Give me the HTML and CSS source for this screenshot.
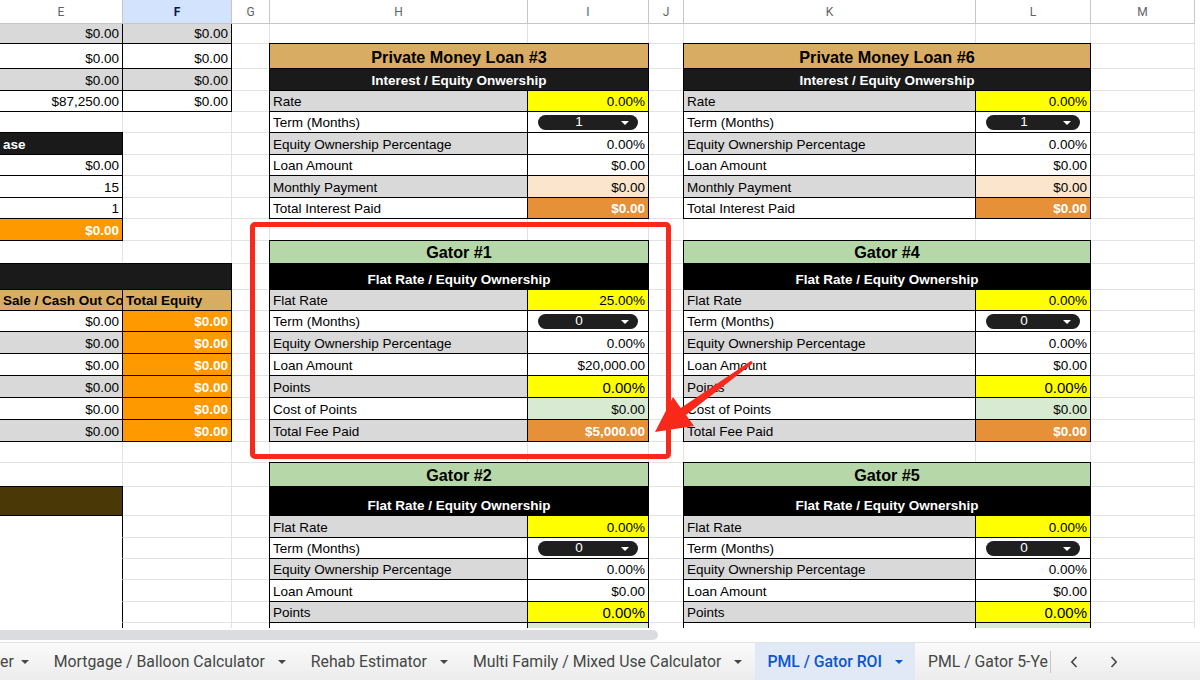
FILE: index.html
```html
<!DOCTYPE html>
<html lang="en">
<head>
    <meta charset="UTF-8">
    <meta name="viewport" content="width=device-width, initial-scale=1.0">
    <title>PML / Gator ROI</title>
    <link rel="stylesheet" href="styles.css">
</head>
<body>

<div class="app">
    <!-- cells get built by the script below -->
    <div class="sheet" id="sheet"></div>

    <div class="hscroll"><div class="thumb"></div></div>

    <div class="tabs">
        <div class="tab first"><span>er</span><i class="caret"></i></div>
        <div class="tab"><span>Mortgage / Balloon Calculator</span><i class="caret"></i></div>
        <div class="tab"><span>Rehab Estimator</span><i class="caret"></i></div>
        <div class="tab"><span>Multi Family / Mixed Use Calculator</span><i class="caret"></i></div>
        <div class="tab active"><span>PML / Gator ROI</span><i class="caret"></i></div>
        <div class="tab cut"><span>PML / Gator 5-Ye</span></div>
        <div class="divider"></div>
        <div class="nav">
            <svg width="8" height="12" viewBox="0 0 8 12"><path d="M6.5 1 1.8 6l4.7 5" fill="none" stroke="#444746" stroke-width="1.6"/></svg>
            <svg width="8" height="12" viewBox="0 0 8 12"><path d="M1.5 1 6.2 6l-4.7 5" fill="none" stroke="#444746" stroke-width="1.6"/></svg>
        </div>
    </div>

    <!-- annotation drawn on top of the screenshot -->
    <div class="mark"></div>
    <svg class="arrow" viewBox="0 0 1200 680">
        <polygon points="751.1,360.8 680.8,407.9 673,397 655,432 694,426 686,415.1 752.9,363.2" fill="#f8291a"/>
    </svg>
</div>

<script>
    const sheet = document.getElementById('sheet');
    const LAST_ROW = 28; // only a sliver of this row shows above the scrollbar

    function add(cls, text) {
        const d = document.createElement('div');
        d.className = cls;
        if (text) d.textContent = text;
        sheet.appendChild(d);
        return d;
    }

    // one grid cell, empty ones just show the grid lines
    function put(item, hideText) {
        if (!item) return add('cell', '');
        const cls = item[0];
        const text = hideText ? '' : item[1];
        if (cls.includes('pick')) {
            const d = add('cell ' + cls, '');
            const chip = document.createElement('span');
            chip.className = 'chip';
            chip.textContent = text;
            d.appendChild(chip);
            return d;
        }
        return add('cell ' + cls, text);
    }

    function pml(n) {
        return [
            [['tan title span2 b bl bt', 'Private Money Loan #' + n]],
            [['ink sub span2 b bl', 'Interest / Equity Onwership']],
            [['gray b bl', 'Rate'], ['yel b num', '0.00%']],
            [['b bl', 'Term (Months)'], ['b pick', '1']],
            [['gray b bl', 'Equity Ownership Percentage'], ['b num', '0.00%']],
            [['b bl', 'Loan Amount'], ['b num', '$0.00']],
            [['gray b bl', 'Monthly Payment'], ['peach b num', '$0.00']],
            [['b bl', 'Total Interest Paid'], ['total b num', '$0.00']]
        ];
    }

    function gator(n, rate, loan, fee) {
        return [
            [['green title span2 b bl bt', 'Gator #' + n]],
            [['black sub span2 b bl', 'Flat Rate / Equity Ownership']],
            [['gray b bl', 'Flat Rate'], ['yel b num', rate]],
            [['b bl', 'Term (Months)'], ['b pick', '0']],
            [['gray b bl', 'Equity Ownership Percentage'], ['b num', '0.00%']],
            [['b bl', 'Loan Amount'], ['b num', loan]],
            [['gray b bl', 'Points'], ['yel b num big', '0.00%']],
            [['b bl', 'Cost of Points'], ['mint b num', '$0.00']],
            [['gray b bl', 'Total Fee Paid'], ['total b num', fee]]
        ];
    }

    // tables stacked down a column pair, keyed by sheet row
    function stack(a, b, c) {
        const out = {};
        [[2, a], [11, b], [21, c]].forEach(([start, t]) => {
            t.forEach((row, i) => out[start + i] = row);
        });
        return out;
    }

    const colH = stack(pml(3), gator(1, '25.00%', '$20,000.00', '$5,000.00'), gator(2, '0.00%', '$0.00', '$0.00'));
    const colK = stack(pml(6), gator(4, '0.00%', '$0.00', '$0.00'), gator(5, '0.00%', '$0.00', '$0.00'));

    const colE = {
        1: [['gray b num', '$0.00'], ['gray b num', '$0.00']],
        2: [['b num', '$0.00'], ['b num', '$0.00']],
        3: [['gray b num', '$0.00'], ['gray b num', '$0.00']],
        4: [['b num', '$87,250.00'], ['b num', '$0.00']],
        6: [['ink b bt bold', 'ase'], null],
        7: [['b num', '$0.00'], null],
        8: [['b num', '15'], null],
        9: [['b num', '1'], null],
        10: [['orange b num', '$0.00'], null],
        12: [['ink b bt span2', '']],
        13: [['tan b bold', 'Sale / Cash Out Co'], ['tan b bold', 'Total Equity']],
        22: [['brown b bt', ''], null]
    };
    for (let r = 14; r <= 19; r++) {
        colE[r] = [[(r % 2 ? 'gray ' : '') + 'b num', '$0.00'], ['orange b num', '$0.00']];
    }
    for (let r = 23; r <= LAST_ROW; r++) colE[r] = [['merged', ''], null];

    // column letters
    ['E', 'F', 'G', 'H', 'I', 'J', 'K', 'L', 'M'].forEach(l => {
        add(l === 'F' ? 'hd sel' : 'hd', l);
    });

    for (let r = 1; r <= LAST_ROW; r++) {
        const row = [].concat(
            colE[r] || [null, null], [null],
            colH[r] || [null, null], [null],
            colK[r] || [null, null], [null]
        );
        row.forEach(item => put(item, r === LAST_ROW));
    }
</script>

</body>
</html>
```

FILE: styles.css
```css
* {
    box-sizing: border-box;
}
body {
    margin: 0;
    overflow: hidden;
    background: #fff;
    font-family: "Liberation Sans", Arial, sans-serif;
}
.app {
    position: relative;
    width: 1200px;
    height: 680px;
    display: flex;
    flex-direction: column;
}

/* Sheet grid */
.sheet {
    flex: none;
    height: 628px;
    overflow: hidden;
    display: grid;
    grid-template-columns: 123px 109px 38px 258px 121px 35px 292px 115px 104px;
    grid-template-rows: 24px 20px 25px 22px 21px 21px 22px 21px 22px 21px 22px 23px 26px 21px 21px 22px 22px 22px 22px 22px 21px 24px 29px 22px 21px 21px 22px 21px 22px;
}
.hd {
    display: flex;
    align-items: center;
    justify-content: center;
    padding-top: 1px;
    border-right: 1px solid #c4c7c5;
    border-bottom: 1px solid #c4c7c5;
    background: #fff;
    color: #5f6368;
    font: 12px Roboto, Arial, sans-serif;
}
.hd.sel {
    background: #d3e3fd;
    color: #041e49;
    font-weight: bold;
}
.cell {
    display: flex;
    align-items: flex-end;
    padding: 0 3px 1px;
    border-right: 1px solid #e2e3e3;
    border-bottom: 1px solid #e2e3e3;
    font-size: 13.5px;
    line-height: 16px;
    color: #000;
    white-space: nowrap;
    overflow: hidden;
    min-width: 0;
}
.b {
    border-right-color: #000;
    border-bottom-color: #000;
}
.bl {
    border-left: 1px solid #000;
    margin-left: -1px;
}
.bt {
    border-top: 1px solid #000;
    margin-top: -1px;
}
.num {
    justify-content: flex-end;
}
.span2 {
    grid-column: span 2;
}
.title {
    justify-content: center;
    font-weight: bold;
    font-size: 16.2px;
    line-height: 19px;
}
.sub {
    justify-content: center;
    font-weight: bold;
}
.bold {
    font-weight: bold;
}
.big {
    font-size: 15px;
}
.merged {
    border-right-color: #000;
    border-bottom-color: #fff;
}

/* fills */
.gray { background: #d9d9d9; }
.yel { background: #ffff00; }
.peach { background: #fce5cd; }
.mint { background: #d9ead3; }
.tan { background: #d8ac62; }
.green { background: #b6d7a8; }
.brown { background: #4a3907; }
.ink { background: #1a1a1a; color: #fff; }
.black { background: #000; color: #fff; }
.total { background: #e69138; color: #fff; font-weight: bold; }
.orange { background: #ff9900; color: #fff; font-weight: bold; }

/* dropdown chip */
.pick {
    align-items: center;
    padding: 0 10px;
}
.chip {
    position: relative;
    flex: 1;
    height: 15px;
    padding-right: 18px;
    border-radius: 8px;
    background: #1f1f1f;
    color: #fff;
    display: flex;
    align-items: center;
    justify-content: center;
    font-size: 13.5px;
}
.chip::after {
    content: "";
    position: absolute;
    right: 9px;
    top: 6px;
    border-left: 4px solid transparent;
    border-right: 4px solid transparent;
    border-top: 4px solid #fff;
}

/* bottom bars */
.hscroll {
    flex: none;
    height: 14px;
    padding-top: 2px;
}
.thumb {
    width: 658px;
    height: 10px;
    background: #dadce0;
    border-radius: 0 5px 5px 0;
}
.tabs {
    flex: 1;
    display: flex;
    align-items: stretch;
    border-top: 1px solid #e3e3e3;
    background: linear-gradient(#fafafa, #ececec);
    font: 15.8px Roboto, sans-serif;
    color: #444746;
    overflow: hidden;
}
.tab {
    flex: none;
    display: flex;
    align-items: center;
    gap: 13px;
    padding: 0 12.5px;
    white-space: nowrap;
}
.tab.first {
    margin-left: -12.5px;
    gap: 7px;
}
.tab.active {
    background: #e1e9f7;
    color: #0b57d0;
    font-weight: 500;
}
.tab.cut {
    padding-right: 2px;
}
.caret {
    width: 0;
    height: 0;
    border-left: 4px solid transparent;
    border-right: 4px solid transparent;
    border-top: 4px solid currentColor;
}
.divider {
    align-self: center;
    width: 1px;
    height: 22px;
    background: #c4c7c5;
}
.nav {
    display: flex;
    align-items: center;
    gap: 32px;
    padding-left: 19px;
}

/* red annotation */
.mark {
    position: absolute;
    left: 250px;
    top: 222px;
    width: 421px;
    height: 237px;
    border: 5px solid #f8291a;
    border-radius: 5px;
    pointer-events: none;
}
.arrow {
    position: absolute;
    left: 0;
    top: 0;
    width: 1200px;
    height: 680px;
    pointer-events: none;
}
```
